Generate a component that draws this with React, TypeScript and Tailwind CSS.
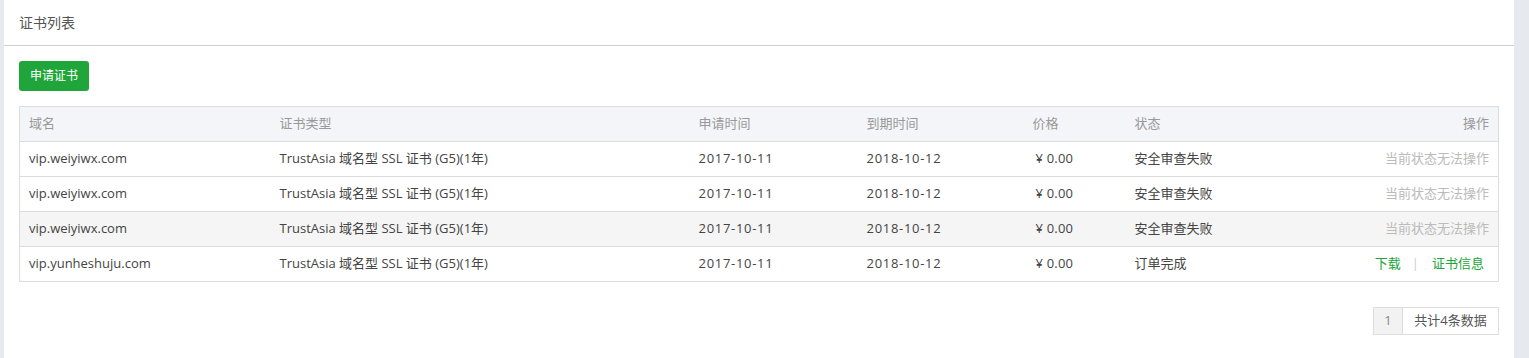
import React from "react";

const rows = [
  { d: "vip.weiyiwx.com", s: "安全审查失败", ok: false, bg: "bg-white" },
  { d: "vip.weiyiwx.com", s: "安全审查失败", ok: false, bg: "bg-white" },
  { d: "vip.weiyiwx.com", s: "安全审查失败", ok: false, bg: "bg-[#f5f5f5]" },
  { d: "vip.yunheshuju.com", s: "订单完成", ok: true, bg: "bg-white" },
];

export default function App() {
  return (
    <div
      className="w-[1529px] h-[358px] bg-[#e6e9ee] pl-[4px] pr-[15px] overflow-hidden"
      style={{ fontFamily: '"Open Sans", "Noto Sans CJK SC", sans-serif' }}
    >
      <div className="bg-white h-full">
        <div className="h-[46px] border-b border-[#cfcfcf] flex items-center pl-[15px] text-[14px] text-[#555]">
          证书列表
        </div>
        <div className="px-[15px] pt-[15px]">
          <button className="h-[30px] w-[70px] rounded-[3px] bg-[#20a53a] text-white text-[12px] flex items-center justify-center">
            申请证书
          </button>
          <table className="mt-[15px] w-[1480px] border border-[#ddd] border-collapse text-[13px] table-fixed">
            <thead>
              <tr className="h-[35px] bg-[#f3f5f8] text-[#999] text-left">
                <th className="font-normal w-[250px] pl-[9px]">域名</th>
                <th className="font-normal w-[419px] pl-[10px]">证书类型</th>
                <th className="font-normal w-[168px] pl-[10px]">申请时间</th>
                <th className="font-normal w-[166px] pl-[10px]">到期时间</th>
                <th className="font-normal w-[102px] pl-[10px]">价格</th>
                <th className="font-normal w-[200px] pl-[10px]">状态</th>
                <th className="font-normal text-right pr-[9px]">操作</th>
              </tr>
            </thead>
            <tbody>
              {rows.map((r, i) => (
                <tr key={i} className={`h-[35px] border-t border-[#ddd] text-[#444] ${r.bg}`}>
                  <td className="pl-[9px]">{r.d}</td>
                  <td className="pl-[10px]">TrustAsia 域名型 SSL 证书 (G5)(1年)</td>
                  <td className="pl-[10px] tracking-[0.7px]">2017-10-11</td>
                  <td className="pl-[10px] tracking-[0.7px]">2018-10-12</td>
                  <td className="pl-[13px] tracking-[0.2px]">¥ 0.00</td>
                  <td className="pl-[10px]">{r.s}</td>
                  <td className="text-right pr-[9px]">
                    {r.ok ? (
                      <span className="pr-[5px]">
                        <span className="text-[#20a53a]">下载</span>
                        <span className="text-[#ccc] pl-[11px] pr-[13px]">|</span>
                        <span className="text-[#20a53a]">证书信息</span>
                      </span>
                    ) : (
                      <span className="text-[#bbb]">当前状态无法操作</span>
                    )}
                  </td>
                </tr>
              ))}
            </tbody>
          </table>
          <div className="flex justify-end mt-[25px]">
            <div className="flex h-[28px] border border-[#ddd] text-[13px]">
              <span className="w-[29px] bg-[#f2f2f2] text-[#888] flex items-center justify-center border-r border-[#ddd]">
                1
              </span>
              <span className="w-[95px] text-[#555] flex items-center justify-center">共计4条数据</span>
            </div>
          </div>
        </div>
      </div>
    </div>
  );
}
